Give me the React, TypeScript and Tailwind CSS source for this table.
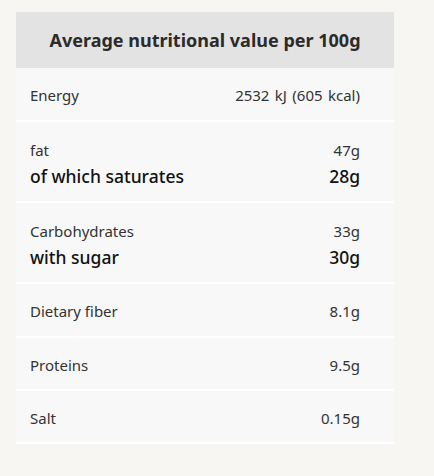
import React from "react";

type Row =
  | { kind: "single"; label: string; value: string; h: string }
  | { kind: "double"; label: string; value: string; sub: string; subValue: string };

const rows: Row[] = [
  { kind: "single", label: "Energy", value: "2532 kJ (605 kcal)", h: "h-[54px]" },
  { kind: "double", label: "fat", value: "47g", sub: "of which saturates", subValue: "28g" },
  { kind: "double", label: "Carbohydrates", value: "33g", sub: "with sugar", subValue: "30g" },
  { kind: "single", label: "Dietary fiber", value: "8.1g", h: "h-[54px]" },
  { kind: "single", label: "Proteins", value: "9.5g", h: "h-[53px]" },
  { kind: "single", label: "Salt", value: "0.15g", h: "h-[53px]" },
];

export default function App() {
  return (
    <div
      className="w-[434px] h-[476px] bg-[#f7f6f3] pt-[12px] pl-[16px]"
      style={{ fontFamily: '"Noto Sans", "Open Sans", sans-serif' }}
    >
      <div className="w-[378px] flex flex-col">
        <div className="h-[56px] bg-[#e3e3e3] flex items-center justify-center">
          <span className="text-[18px] font-bold text-[#2b2b2b]">Average nutritional value per 100g</span>
        </div>
        {rows.map((r, i) =>
          r.kind === "single" ? (
            <div
              key={i}
              className={`${r.h} bg-[#f8f8f8] border-b-2 border-white flex items-center justify-between pl-[14px] pr-[34px] pt-[3px] text-[15px] text-[#333333]`}
            >
              <span>{r.label}</span>
              <span className="[word-spacing:1.5px]">{r.value}</span>
            </div>
          ) : (
            <div
              key={i}
              className="h-[81px] bg-[#f8f8f8] border-b-2 border-white flex flex-col pl-[14px] pr-[34px] pt-[18px]"
            >
              <div className="flex justify-between text-[15px] text-[#333333] leading-[20px]">
                <span>{r.label}</span>
                <span>{r.value}</span>
              </div>
              <div className="flex justify-between text-[17.5px] font-medium text-[#111111] leading-[32px]">
                <span>{r.sub}</span>
                <span>{r.subValue}</span>
              </div>
            </div>
          )
        )}
      </div>
    </div>
  );
}
